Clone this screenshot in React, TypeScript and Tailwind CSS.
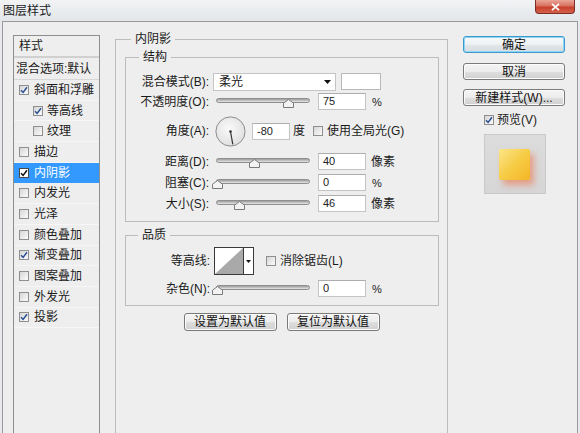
import React from "react";

function Cb({ on, sel }: { on?: boolean; sel?: boolean }) {
  return (
    <span
      className={
        sel
          ? "flex w-[10px] h-[10px] shrink-0 items-center justify-center border border-[#4a4a4a] bg-white"
          : "flex w-[10px] h-[10px] shrink-0 items-center justify-center border border-[#8f8f8f] bg-gradient-to-br from-[#d6d6d6] to-[#fbfbfb]"
      }
    >
      {on && (
        <svg width="8" height="8" viewBox="0 0 8 8">
          <path
            d="M1 4.2 L3.1 6.4 L7 1.2"
            fill="none"
            stroke={sel ? "#111" : "#2b4f94"}
            strokeWidth="1.5"
          />
        </svg>
      )}
    </span>
  );
}

function Slider({ thumb }: { thumb: string }) {
  return (
    <div className="relative w-[96px] h-[12px] shrink-0">
      <div className="absolute left-[2px] right-0 top-[2px] h-[5px] rounded-full border border-[#8e8e8e] bg-gradient-to-b from-[#9c9c9c] to-[#e6e6e6]" />
      <svg
        className={"absolute top-[3px] " + thumb}
        width="11"
        height="9"
        viewBox="0 0 11 9"
      >
        <path
          d="M5.5 0.5 L10.5 4.2 L10.5 8.5 L0.5 8.5 L0.5 4.2 Z"
          fill="#f3f3f3"
          stroke="#7a7a7a"
        />
      </svg>
    </div>
  );
}

function Inp({ v, w }: { v: string; w: string }) {
  return (
    <div
      className={
        "h-[17px] shrink-0 border border-[#c4c4c4] border-t-[#adadad] bg-white pl-[4px] text-[11px] leading-[15px] text-[#222] " +
        w
      }
    >
      {v}
    </div>
  );
}

function Btn({
  children,
  w,
  h,
  def,
}: {
  children: React.ReactNode;
  w: string;
  h: string;
  def?: boolean;
}) {
  return (
    <div
      className={
        "flex items-center justify-center rounded-[3px] border text-[12px] leading-none text-[#111] " +
        w +
        " " +
        h +
        (def
          ? " border-[#3a9ad0] shadow-[inset_0_0_0_1px_#8fd5f5] bg-[linear-gradient(#f7f9fa_0%,#eef1f3_50%,#e2e6e9_51%,#d6dce0_100%)]"
          : " border-[#7a7a7a] bg-[linear-gradient(#f4f4f4_0%,#ececec_50%,#dedede_51%,#d0d0d0_100%)] shadow-[inset_0_0_0_1px_#fbfbfb]")
      }
    >
      {children}
    </div>
  );
}

const items: { t: string; c?: boolean; ind?: boolean; sel?: boolean }[] = [
  { t: "斜面和浮雕", c: true },
  { t: "等高线", c: true, ind: true },
  { t: "纹理", ind: true },
  { t: "描边" },
  { t: "内阴影", c: true, sel: true },
  { t: "内发光" },
  { t: "光泽" },
  { t: "颜色叠加" },
  { t: "渐变叠加", c: true },
  { t: "图案叠加" },
  { t: "外发光" },
  { t: "投影", c: true },
];

function Arrow() {
  return (
    <svg width="7" height="4" viewBox="0 0 7 4">
      <path d="M0 0 L7 0 L3.5 4 Z" fill="#111" />
    </svg>
  );
}

export default function App() {
  return (
    <div className="w-[580px] h-[433px] overflow-hidden flex flex-col bg-[#e7e9ec] text-[#1b1b1b] text-[12px] leading-[16px] font-[Liberation_Sans,Noto_Sans_CJK_SC,sans-serif]">
      {/* title bar */}
      <div className="relative h-[21px] shrink-0 flex items-center pl-[3px] bg-gradient-to-b from-[#f2f3f5] via-[#eaedf0] to-[#e4e7ea]">
        <span className="text-[12px] text-[#1a1a1a]">图层样式</span>
        <div className="absolute right-[5px] top-0 w-[40px] h-[14px] rounded-b-[4px] border border-t-0 border-[#7e2e26] bg-[linear-gradient(#e9a597_0%,#d9705f_45%,#c7402c_55%,#d4604a_100%)] flex items-center justify-center">
          <svg width="9" height="8" viewBox="0 0 9 8">
            <path d="M1 0.8 L8 7.2 M8 0.8 L1 7.2" stroke="#fff" strokeWidth="1.8" />
          </svg>
        </div>
      </div>

      {/* body */}
      <div className="flex-1 mx-[2px] border-l border-r border-t border-[#999999] bg-[#eeeeee] flex overflow-hidden">
        {/* left list */}
        <div className="ml-[10px] mt-[13px] w-[87px] shrink-0 border border-b-0 border-[#8e8e8e] bg-[#eeeeee] flex flex-col">
          <div className="h-[22px] shrink-0 flex items-center pl-[5px] border-b-2 border-[#d0d0d0]">
            样式
          </div>
          <div className="h-[22px] shrink-0 flex items-center pl-[2px] border-b border-[#d6d6d6] whitespace-nowrap">
            混合选项:默认
          </div>
          {items.map((it) => (
            <div
              key={it.t}
              className={
                "h-[20.7px] shrink-0 flex items-center border-b whitespace-nowrap " +
                (it.sel
                  ? "bg-[#3399ff] text-white border-[#3399ff]"
                  : "border-[#f6f6f6]") +
                (it.ind ? " pl-[19px]" : " pl-[5px]")
              }
            >
              <Cb on={it.c} sel={it.sel} />
              <span className={it.ind ? "ml-[4px]" : "ml-[5px]"}>{it.t}</span>
            </div>
          ))}
        </div>

        {/* middle */}
        <fieldset className="ml-[15px] mt-[9px] w-[333px] shrink-0 h-[420px] border border-b-0 border-[#bcbcbc] p-0">
          <legend className="ml-[15px] px-[4px] leading-[16px]">内阴影</legend>

          <fieldset className="ml-[9px] mr-[8px] mt-[2px] border border-[#bcbcbc] pb-[7px]">
            <legend className="ml-[13px] px-[4px] leading-[16px]">结构</legend>

            <div className="mt-[7px] h-[19px] flex items-center">
              <div className="w-[83px] text-right whitespace-nowrap">混合模式(B):</div>
              <div className="ml-[4px] w-[123px] h-[18px] border border-[#c4c4c4] bg-white flex items-center pl-[5px] pr-[4px] justify-between">
                <span>柔光</span>
                <Arrow />
              </div>
              <div className="ml-[5px] w-[40px] h-[17px] border border-[#b8b8b8] bg-white" />
            </div>

            <div className="mt-[1px] h-[19px] flex items-center">
              <div className="w-[83px] text-right whitespace-nowrap">不透明度(O):</div>
              <div className="ml-[5px]">
                <Slider thumb="left-[69px]" />
              </div>
              <div className="ml-[8px]">
                <Inp v="75" w="w-[48px]" />
              </div>
              <span className="ml-[6px] text-[11px]">%</span>
            </div>

            <div className="mt-[4px] h-[32px] flex items-center">
              <div className="w-[83px] text-right whitespace-nowrap">角度(A):</div>
              <svg className="ml-[6px] shrink-0" width="31" height="31" viewBox="0 0 31 31">
                <defs>
                  <radialGradient id="dg" cx="45%" cy="40%" r="60%">
                    <stop offset="0" stopColor="#fafafa" />
                    <stop offset="1" stopColor="#e0e0e0" />
                  </radialGradient>
                </defs>
                <circle cx="15.5" cy="15.5" r="14.6" fill="url(#dg)" stroke="#8c8c8c" />
                <line x1="15.5" y1="15.5" x2="17.8" y2="28.3" stroke="#333" strokeWidth="1.2" />
                <circle cx="15.5" cy="15.5" r="1.3" fill="#333" />
              </svg>
              <div className="ml-[6px]">
                <Inp v="-80" w="w-[38px]" />
              </div>
              <span className="ml-[3px]">度</span>
              <span className="ml-[8px]">
                <Cb />
              </span>
              <span className="ml-[4px] whitespace-nowrap">使用全局光(G)</span>
            </div>

            <div className="mt-[4px] h-[21px] flex items-center">
              <div className="w-[83px] text-right whitespace-nowrap">距离(D):</div>
              <div className="ml-[5px]">
                <Slider thumb="left-[35px]" />
              </div>
              <div className="ml-[8px]">
                <Inp v="40" w="w-[48px]" />
              </div>
              <span className="ml-[5px]">像素</span>
            </div>

            <div className="h-[21px] flex items-center">
              <div className="w-[83px] text-right whitespace-nowrap">阻塞(C):</div>
              <div className="ml-[5px]">
                <Slider thumb="left-[-2px]" />
              </div>
              <div className="ml-[8px]">
                <Inp v="0" w="w-[48px]" />
              </div>
              <span className="ml-[6px] text-[11px]">%</span>
            </div>

            <div className="h-[21px] flex items-center">
              <div className="w-[83px] text-right whitespace-nowrap">大小(S):</div>
              <div className="ml-[5px]">
                <Slider thumb="left-[20px]" />
              </div>
              <div className="ml-[8px]">
                <Inp v="46" w="w-[48px]" />
              </div>
              <span className="ml-[5px]">像素</span>
            </div>
          </fieldset>

          <fieldset className="ml-[9px] mr-[8px] mt-[5px] border border-[#bcbcbc] pb-[7px]">
            <legend className="ml-[12px] px-[4px] leading-[16px]">品质</legend>

            <div className="mt-[4px] h-[28px] flex items-center">
              <div className="w-[84px] text-right whitespace-nowrap">等高线:</div>
              <div className="ml-[4px] flex h-[28px]">
                <div className="w-[30px] h-[28px] border border-[#3a3a3a] bg-white">
                  <svg width="28" height="26" viewBox="0 0 28 26" className="block">
                    <polygon points="0,26 28,0 28,26" fill="#a9a9a9" />
                  </svg>
                </div>
                <div className="w-[10px] h-[28px] border border-l-0 border-[#3a3a3a] bg-white flex items-center justify-center">
                  <svg width="5" height="3" viewBox="0 0 5 3">
                    <path d="M0 0 L5 0 L2.5 3 Z" fill="#111" />
                  </svg>
                </div>
              </div>
              <span className="ml-[12px]">
                <Cb />
              </span>
              <span className="ml-[4px] whitespace-nowrap">消除锯齿(L)</span>
            </div>

            <div className="mt-[4px] h-[19px] flex items-center">
              <div className="w-[84px] text-right whitespace-nowrap">杂色(N):</div>
              <div className="ml-[4px]">
                <Slider thumb="left-[-2px]" />
              </div>
              <div className="ml-[8px]">
                <Inp v="0" w="w-[48px]" />
              </div>
              <span className="ml-[6px] text-[11px]">%</span>
            </div>
          </fieldset>

          <div className="mt-[7px] flex justify-center gap-[10px]">
            <Btn w="w-[93px]" h="h-[18px]">设置为默认值</Btn>
            <Btn w="w-[93px]" h="h-[18px]">复位为默认值</Btn>
          </div>
        </fieldset>

        {/* right column */}
        <div className="ml-[15px] mt-[14px] w-[102px] shrink-0 flex flex-col">
          <Btn w="w-[102px]" h="h-[17px]" def>
            确定
          </Btn>
          <div className="mt-[10px]">
            <Btn w="w-[102px]" h="h-[17px]">取消</Btn>
          </div>
          <div className="mt-[9px]">
            <Btn w="w-[102px]" h="h-[17px]">新建样式(W)...</Btn>
          </div>
          <div className="mt-[7px] h-[14px] flex items-center pl-[21px]">
            <Cb on />
            <span className="ml-[3px] whitespace-nowrap">预览(V)</span>
          </div>
          <div className="mt-[7px] ml-[21px] w-[62px] h-[60px] border border-[#c9c9c9] bg-gradient-to-b from-[#dcdcdc] to-[#d6d6d6] pl-[14px] pt-[14px]">
            <div className="w-[31px] h-[31px] rounded-[2px] bg-gradient-to-br from-[#fbe585] via-[#f7cc45] to-[#f3b523] shadow-[4px_5px_6px_rgba(238,110,70,0.55)]" />
          </div>
        </div>
      </div>
    </div>
  );
}
